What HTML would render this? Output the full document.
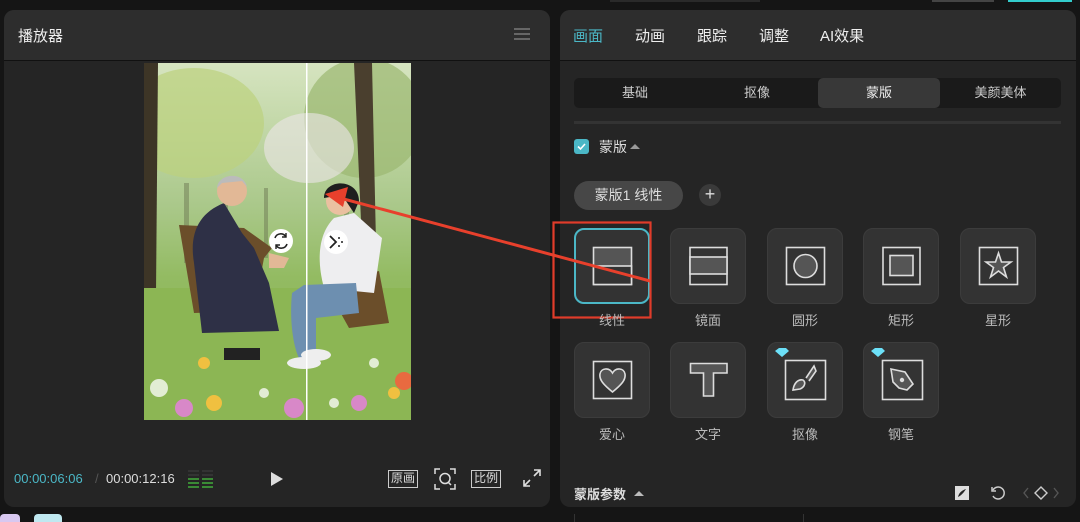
<!DOCTYPE html>
<html><head><meta charset="utf-8">
<style>
*{margin:0;padding:0;box-sizing:border-box}
body{width:1080px;height:522px;background:#151515;position:relative;overflow:hidden;font-family:"Liberation Sans","Noto Sans CJK SC",sans-serif;color:#ddd}
.abs{position:absolute}
.panel{position:absolute;background:#252525;border-radius:10px;overflow:hidden}
.hdr{position:absolute;left:0;top:0;right:0;height:51px;background:#2d2d2d;border-bottom:1px solid #111}
.tile{position:absolute;width:76px;height:76px;background:#333;border:1px solid #3c3c3c;border-radius:10px}
.lbl{position:absolute;width:76px;text-align:center;font-size:13px;color:#bbb}
.seg{position:absolute;top:78px;height:30px;line-height:30px;text-align:center;font-size:13px;color:#ccc}
</style></head><body>
<div class="abs" style="left:610px;top:0;width:150px;height:2px;background:#2a2a2a"></div>
<div class="abs" style="left:932px;top:0;width:62px;height:2px;background:#444"></div>
<div class="abs" style="left:1008px;top:0;width:64px;height:2px;background:#3cc"></div>

<!-- left panel -->
<div class="panel" style="left:4px;top:10px;width:546px;height:497px">
 <div class="hdr"><div class="abs" style="left:14px;top:15px;font-size:15px;color:#eee">播放器</div>
  <div class="abs" style="left:510px;top:18px;width:16px;height:2px;background:#666;box-shadow:0 5px 0 #666,0 10px 0 #666"></div></div>
 <div class="abs" style="left:10px;top:461px;font-size:13px;color:#4bb7c6">00:00:06:06</div>
 <div class="abs" style="left:91px;top:461px;font-size:13px;color:#555">/</div>
 <div class="abs" style="left:102px;top:461px;font-size:13px;color:#ddd">00:00:12:16</div>
 <svg class="abs" style="left:183px;top:459px" width="30" height="22">
  <g fill="#333"><rect x="1" y="1" width="11" height="2"/><rect x="1" y="5" width="11" height="2"/><rect x="15" y="1" width="11" height="2"/><rect x="15" y="5" width="11" height="2"/></g>
  <g fill="#3a8a35"><rect x="1" y="9" width="11" height="2"/><rect x="1" y="13" width="11" height="2"/><rect x="1" y="17" width="11" height="2"/><rect x="15" y="9" width="11" height="2"/><rect x="15" y="13" width="11" height="2"/><rect x="15" y="17" width="11" height="2"/></g></svg>
 <svg class="abs" style="left:266px;top:461px" width="14" height="16"><path d="M1 1L13 8L1 15Z" fill="#ddd"/></svg>
 <div class="abs" style="left:384px;top:460px;width:30px;height:18px;border:1.5px solid #ccc;font-size:12px;line-height:15px;text-align:center;color:#ddd">原画</div>
 <svg class="abs" style="left:430px;top:458px" width="22" height="22" fill="none" stroke="#ddd" stroke-width="1.5"><path d="M1 6V1H6M16 1H21V6M21 16V21H16M6 21H1V16"/><circle cx="11" cy="10.5" r="5"/><path d="M14 14L17 17"/></svg>
 <div class="abs" style="left:467px;top:460px;width:30px;height:18px;border:1.5px solid #ccc;font-size:12px;line-height:15px;text-align:center;color:#ddd">比例</div>
 <svg class="abs" style="left:519px;top:459px" width="18" height="18" fill="none" stroke="#ddd" stroke-width="1.6"><path d="M11 1H17V7M17 1L11 7M7 17H1V11M1 17L7 11"/></svg>
</div>

<!-- video frame -->
<svg class="abs" style="left:144px;top:63px" width="267" height="357" viewBox="0 0 267 357">
 <defs><linearGradient id="sky" x1="0" y1="0" x2="0" y2="1"><stop offset="0" stop-color="#d6e4c0"/><stop offset=".4" stop-color="#aac88a"/><stop offset=".6" stop-color="#93bb62"/><stop offset="1" stop-color="#82ad50"/></linearGradient></defs>
 <rect width="267" height="357" fill="url(#sky)"/>
 <ellipse cx="50" cy="60" rx="70" ry="55" fill="#bcd27e" opacity=".7"/>
 <ellipse cx="220" cy="55" rx="60" ry="60" fill="#9bb870" opacity=".7"/>
 <ellipse cx="165" cy="85" rx="45" ry="35" fill="#ece6ea" opacity=".6"/>
 <g fill="#6f7a55" opacity=".5"><rect x="40" y="120" width="5" height="80"/><rect x="80" y="130" width="4" height="70"/><rect x="120" y="125" width="4" height="70"/><rect x="200" y="140" width="5" height="60"/></g>
 <path d="M0 0H14L12 230H0Z" fill="#3d3526"/>
 <path d="M210 0L228 0L232 180L218 180Z" fill="#4a3f2e"/>
 <rect x="0" y="225" width="267" height="132" fill="#8cb654"/>
 <g fill="#fff" opacity=".75"><circle cx="15" cy="325" r="9"/><circle cx="120" cy="330" r="5"/><circle cx="230" cy="300" r="5"/><circle cx="190" cy="340" r="5"/></g>
 <g fill="#d888c8"><circle cx="40" cy="345" r="9"/><circle cx="215" cy="340" r="8"/><circle cx="150" cy="345" r="10"/></g>
 <g fill="#f0c040"><circle cx="70" cy="340" r="8"/><circle cx="60" cy="300" r="6"/><circle cx="250" cy="330" r="6"/></g>
 <circle cx="260" cy="318" r="9" fill="#e86a40"/>
 <!-- old man -->
 <path d="M35 162L50 250L110 248L120 195L128 185L100 165Z" fill="#6b4e2a"/>
 <path d="M80 140C55 150 45 170 50 200L58 270L135 268L125 220L110 185L98 170Z" fill="#2e3046"/>
 <circle cx="88" cy="128" r="15" fill="#e2b896"/><path d="M73 125C74 110 100 108 103 124L98 118L78 120Z" fill="#bbb"/>
 <path d="M125 190L145 195L140 205L125 205Z" fill="#e2b896"/>
 <rect x="80" y="285" width="36" height="12" fill="#222"/>
 <!-- young man -->
 <path d="M180 220L235 208L245 260L205 265Z" fill="#6b4e2a"/>
 <path d="M190 155C175 170 172 195 180 225L230 230L238 175L210 150Z" fill="#eeeef0"/>
 <circle cx="196" cy="138" r="14" fill="#eac0a0"/><path d="M180 135C180 115 215 115 215 138L210 150L198 132Z" fill="#1e1e1e"/>
 <path d="M148 230C145 260 150 290 158 300L172 300L172 255L215 250L212 220L160 222Z" fill="#6d8fb0"/>
 <ellipse cx="160" cy="300" rx="17" ry="6" fill="#eee"/><ellipse cx="172" cy="292" rx="15" ry="6" fill="#eee"/>
 <rect x="162" y="0" width="1.5" height="357" fill="#fff"/>
 <circle cx="137" cy="178" r="12" fill="#fff"/>
 <path d="M131 175A6 6 0 0 1 142 174M143 181A6 6 0 0 1 132 182" stroke="#222" stroke-width="1.6" fill="none"/>
 <path d="M142 170L142 174L138 174M132 186L132 182L136 182" stroke="#222" stroke-width="1.4" fill="none"/>
 <circle cx="192" cy="179" r="12" fill="#fff"/>
 <path d="M186 173L192 179L186 185" stroke="#222" stroke-width="1.8" fill="none"/>
 <g fill="#222"><circle cx="195" cy="175" r="1"/><circle cx="198" cy="179" r="1"/><circle cx="195" cy="183" r="1"/></g>
</svg>

<!-- right panel -->
<div class="panel" style="left:560px;top:10px;width:516px;height:497px">
 <div class="hdr">
  <div class="abs" style="left:13px;top:15px;font-size:15px;color:#4bb7c6">画面</div>
  <div class="abs" style="left:75px;top:15px;font-size:15px;color:#eee">动画</div>
  <div class="abs" style="left:137px;top:15px;font-size:15px;color:#eee">跟踪</div>
  <div class="abs" style="left:199px;top:15px;font-size:15px;color:#eee">调整</div>
  <div class="abs" style="left:260px;top:15px;font-size:15px;color:#eee">AI效果</div>
 </div>
 <div class="abs" style="left:14px;top:68px;width:487px;height:30px;background:#1a1a1a;border-radius:5px"></div>
 <div class="abs" style="left:258px;top:68px;width:122px;height:30px;background:#383838;border-radius:5px"></div>
 <div class="seg" style="left:14px;width:122px;top:68px">基础</div>
 <div class="seg" style="left:136px;width:122px;top:68px">抠像</div>
 <div class="seg" style="left:258px;width:122px;top:68px;color:#eee">蒙版</div>
 <div class="seg" style="left:380px;width:121px;top:68px">美颜美体</div>
 <div class="abs" style="left:14px;top:111px;width:487px;height:3px;background:#333"></div>
 <div class="abs" style="left:14px;top:129px;width:15px;height:15px;background:#4bb7c6;border-radius:3px"></div>
 <svg class="abs" style="left:14px;top:129px" width="15" height="15"><path d="M4 7.5L6.5 10L11 5" stroke="#fff" stroke-width="1.6" fill="none"/></svg>
 <div class="abs" style="left:39px;top:127px;font-size:14px;color:#ddd">蒙版</div>
 <svg class="abs" style="left:70px;top:133px" width="10" height="6"><path d="M0 6L5 1L10 6Z" fill="#999"/></svg>
 <div class="abs" style="left:14px;top:171px;width:109px;height:29px;background:#474747;border-radius:15px;font-size:14px;line-height:29px;text-align:center;color:#ddd">蒙版1 线性</div>
 <div class="abs" style="left:139px;top:174px;width:22px;height:22px;background:#3a3a3a;border-radius:50%;font-size:18px;line-height:21px;text-align:center;color:#ddd">+</div>
 <div class="abs" style="left:14px;top:474px;font-size:13px;color:#ddd;font-weight:bold">蒙版参数</div>
 <svg class="abs" style="left:74px;top:480px" width="10" height="6"><path d="M0 6L5 1L10 6Z" fill="#bbb"/></svg>
 <svg class="abs" style="left:394px;top:475px" width="16" height="16"><rect x="1" y="1" width="14" height="14" fill="#ddd"/><path d="M4 12C5 7 9 5 12 4C10 7 8 10 4 12Z" fill="#252525"/></svg>
 <svg class="abs" style="left:430px;top:475px" width="16" height="16" fill="none" stroke="#ccc" stroke-width="1.5"><path d="M3 5A6 6 0 1 1 3 11"/><path d="M2 2V6H6"/></svg>
 <svg class="abs" style="left:462px;top:475px" width="58" height="16" fill="none" stroke-width="1.4"><path d="M6 3L2 8L6 13" stroke="#555"/><path d="M19 2L25 8L19 14L13 8Z" stroke="#ccc"/><path d="M32 3L36 8L32 13" stroke="#555"/></svg>
</div>

<!-- tiles -->
<div class="tile" style="left:574px;top:228px;border:2px solid #4bb7c6"></div>
<div class="tile" style="left:670px;top:228px"></div>
<div class="tile" style="left:767px;top:228px"></div>
<div class="tile" style="left:863px;top:228px"></div>
<div class="tile" style="left:960px;top:228px"></div>
<div class="tile" style="left:574px;top:342px"></div>
<div class="tile" style="left:670px;top:342px"></div>
<div class="tile" style="left:767px;top:342px"></div>
<div class="tile" style="left:863px;top:342px"></div>
<svg class="abs" style="left:0;top:0" width="1080" height="522" fill="none" stroke="#ddd" stroke-width="1.6">
 <rect x="593.5" y="247.5" width="38" height="37" fill="#555"/><rect x="593.5" y="266" width="38" height="18.5" fill="#333"/>
 <rect x="690" y="247.5" width="37" height="37" fill="#333"/><rect x="690" y="257" width="37" height="17" fill="#555"/>
 <rect x="786.5" y="247.5" width="38" height="37"/><circle cx="805.5" cy="266" r="11.5" fill="#555"/>
 <rect x="883" y="247.5" width="37" height="37"/><rect x="890" y="255.5" width="23" height="20" fill="#555"/>
 <rect x="979.5" y="247.5" width="38" height="37"/><path d="M998.5 253L1001.5 262L1011 262L1003.5 267.5L1006.5 277L998.5 271L990.5 277L993.5 267.5L986 262L995.5 262Z" fill="#555"/>
 <rect x="593.5" y="361.5" width="38" height="37"/><path d="M612.5 392C604 385 599 380 600 374C601 368 609 367 612.5 373C616 367 624 368 625 374C626 380 621 385 612.5 392Z" fill="#555"/>
 <path d="M690.5 363.5H727V373H713.5V396H703.5V373H690.5Z" fill="#555"/>
 <rect x="785.5" y="360.5" width="40" height="39"/><path d="M793 390C794 383 798 379 803 380C806 382 805 387 800 389Z M806 378L814 366L816 371L809 381" fill="#555"/>
 <rect x="882.5" y="360.5" width="40" height="39"/><path d="M891 369L905 372L913 384L907 390L899 388L893 382Z" fill="#555"/><circle cx="902" cy="380" r="1.4" fill="#ddd"/>
 <path d="M775 351L779 348H786L789 351L782 357Z M871 351L875 348H882L885 351L878 357Z" fill="#6ce0f8" stroke="none"/>
 <rect x="553.5" y="222.5" width="97" height="95" stroke="#e03c2a" stroke-width="2.2"/>
 <path d="M650 281L340 198" stroke="#e8402c" stroke-width="3"/>
 <path d="M325 194L348 187L343 207Z" fill="#e8402c" stroke="none"/>
</svg>
<div class="lbl" style="left:574px;top:310px">线性</div>
<div class="lbl" style="left:670px;top:310px">镜面</div>
<div class="lbl" style="left:767px;top:310px">圆形</div>
<div class="lbl" style="left:863px;top:310px">矩形</div>
<div class="lbl" style="left:960px;top:310px">星形</div>
<div class="lbl" style="left:574px;top:424px">爱心</div>
<div class="lbl" style="left:670px;top:424px">文字</div>
<div class="lbl" style="left:767px;top:424px">抠像</div>
<div class="lbl" style="left:863px;top:424px">钢笔</div>

<div class="abs" style="left:0;top:514px;width:20px;height:8px;background:#d8c8f0;border-radius:4px 4px 0 0"></div>
<div class="abs" style="left:34px;top:514px;width:28px;height:8px;background:#bfe8f0;border-radius:4px 4px 0 0"></div>
<div class="abs" style="left:574px;top:514px;width:1px;height:8px;background:#333"></div>
<div class="abs" style="left:803px;top:514px;width:1px;height:8px;background:#333"></div>
</body></html>
